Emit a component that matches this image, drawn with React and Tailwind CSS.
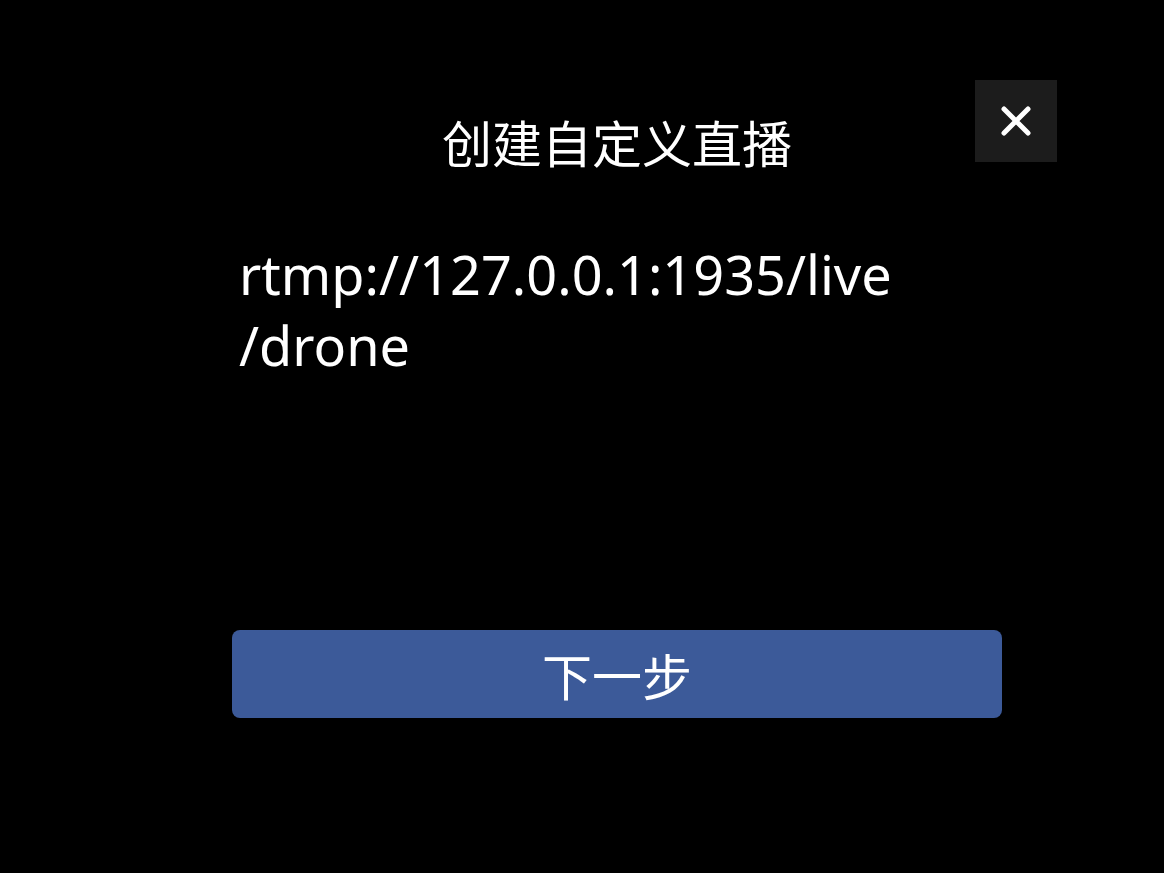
import React from 'react';

export default function App() {
    return (
        <div className="relative w-full h-[873px] bg-black overflow-hidden font-['Noto_Sans','Noto_Sans_CJK_SC',sans-serif] text-white">
            {/* Close */}
            <button className="absolute top-[80px] right-[107px] w-[82px] h-[82px] bg-[#1c1c1c] flex items-center justify-center">
                <svg width="30" height="30" viewBox="0 0 30 30" fill="none" stroke="white" strokeWidth="5" strokeLinecap="round">
                    <path d="M3 3 L27 27 M27 3 L3 27" />
                </svg>
            </button>

            <div className="ml-[232px] w-[770px] flex flex-col">
                <h1 className="mt-[116px] text-center text-[50px] leading-[50px] font-normal font-['Noto_Sans_CJK_SC',sans-serif]">
                    创建自定义直播
                </h1>

                <div className="mt-[73px] pl-[7px] text-[54px] leading-[71px]">
                    <div>rtmp://127.0.0.1:1935/live</div>
                    <div>/drone</div>
                </div>

                <button className="mt-[249px] h-[88px] rounded-[8px] bg-[#3c5a99] flex items-center justify-center text-[50px] font-['Noto_Sans_CJK_SC',sans-serif]">
                    下一步
                </button>
            </div>
        </div>
    );
}
